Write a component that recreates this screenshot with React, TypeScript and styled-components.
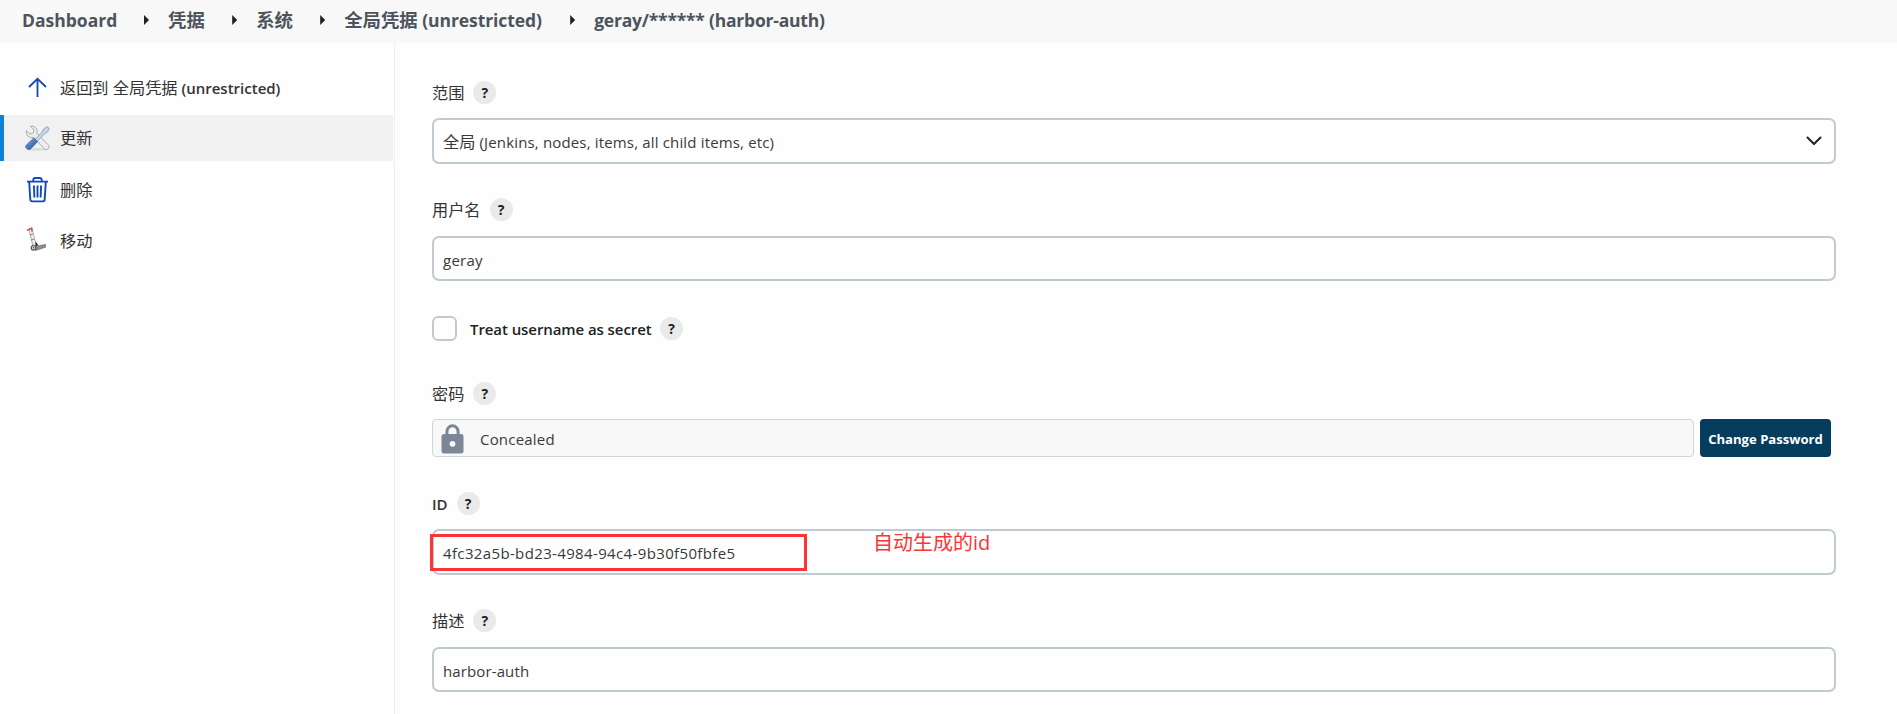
import React from 'react';
import styled, { createGlobalStyle } from 'styled-components';

const GlobalStyle = createGlobalStyle`
  * { box-sizing: border-box; }
  html, body { margin: 0; padding: 0; height: 714px; overflow: hidden; }
  body {
    background: #fefefe;
    color: #333;
    font-family: 'Open Sans', 'Noto Sans', 'Noto Sans CJK SC', sans-serif;
    font-size: 16.2px;
  }
`;

const Page = styled.div`
  display: flex;
  flex-direction: column;
  height: 714px;
`;

const Breadcrumbs = styled.nav`
  display: flex;
  align-items: center;
  flex: none;
  height: 43px;
  padding: 0 0 3px 22px;
  background: #f8f8f8;
`;

const Crumb = styled.a<{ $width: number }>`
  width: ${(p) => p.$width}px;
  font-size: 18.4px;
  font-weight: 700;
  line-height: 24px;
  color: #4d545d;
  white-space: nowrap;
`;

const Separator = styled.i`
  flex: none;
  width: 5px;
  height: 10px;
  margin: 0 19px 0 27px;
  background: #222;
  clip-path: polygon(0 0, 100% 50%, 0 100%);
`;

const Text = styled.span<{ $size?: number; $spacing?: number; $weight?: number }>`
  font-size: ${(p) => p.$size ?? 15}px;
  letter-spacing: ${(p) => p.$spacing ?? 0}px;
  font-weight: ${(p) => p.$weight ?? 'inherit'};
  white-space: pre;
`;

const Body = styled.div`
  display: flex;
  flex: 1;
  min-height: 0;
`;

const Sidebar = styled.aside`
  display: flex;
  flex-direction: column;
  gap: 5px;
  flex: none;
  width: 395px;
  padding: 21px 1px 0 0;
  border-right: 1px solid #efeff0;
`;

const Task = styled.a<{ $active?: boolean }>`
  display: flex;
  align-items: center;
  gap: 10px;
  height: 46px;
  padding: ${(p) => (p.$active ? 0 : 2)}px 0 0 21px;
  background: ${(p) => (p.$active ? '#f1f1f1' : 'transparent')};
  box-shadow: ${(p) => (p.$active ? 'inset 4px 0 0 #0b81d8' : 'none')};
  line-height: 24px;
  white-space: nowrap;

  svg { display: block; flex: none; width: 29px; height: 28px; }
`;

const Form = styled.main`
  display: flex;
  flex-direction: column;
  flex: 1;
  padding: 38px 61px 0 37px;
`;

const Field = styled.section<{ $gap?: number; $after?: number }>`
  display: flex;
  flex-direction: column;
  gap: ${(p) => p.$gap ?? 14}px;
  margin-bottom: ${(p) => p.$after ?? 34}px;
`;

const LabelRow = styled.div`
  display: flex;
  align-items: flex-start;
  gap: 9px;
  height: 24px;
  line-height: 24px;
  color: #333;
`;

const HelpButton = styled.span`
  display: flex;
  align-items: center;
  justify-content: center;
  width: 23px;
  height: 23px;
  border-radius: 50%;
  background: #eaeaea;
  color: #222;
  font-size: 14px;
  font-weight: 700;
  line-height: 23px;
`;

const Control = styled.div<{ $height?: number; $shift?: number }>`
  position: relative;
  display: flex;
  align-items: center;
  justify-content: space-between;
  height: ${(p) => p.$height ?? 45}px;
  padding: ${(p) => p.$shift ?? 2}px 12px 0 9px;
  border: 2px solid #bfcbd0;
  border-radius: 7px;
  color: #3a3a3a;
  white-space: nowrap;
`;

const Chevron = styled.svg`
  width: 16px;
  height: 10px;
`;

const CheckRow = styled.div`
  display: flex;
  align-items: center;
  height: 25px;
  margin-bottom: 41px;
`;

const Checkbox = styled.span`
  width: 25px;
  height: 25px;
  margin-right: 13px;
  border: 2px solid #bfcbd0;
  border-radius: 6px;
`;

const CheckLabel = styled.span`
  width: 190px;
  color: #222;
`;

const PasswordRow = styled.div`
  display: flex;
  gap: 6px;
  height: 38px;
  padding-right: 5px;
`;

const Concealed = styled.div`
  display: flex;
  align-items: center;
  flex: 1;
  gap: 16px;
  padding: 2px 0 0 8px;
  border: 1px solid #cdd6da;
  border-radius: 4px;
  background: #f8f8f8;
  color: #3a3a3a;

  svg { display: block; width: 23px; height: 30px; }
`;

const ChangeButton = styled.button`
  width: 131px;
  padding: 2px 0 0;
  border: 0;
  border-radius: 4px;
  background: #063c5c;
  color: #fff;
  font: 700 13.1px 'Open Sans', sans-serif;
  white-space: nowrap;
`;

const Highlight = styled.div`
  position: absolute;
  left: -4px;
  top: 3px;
  width: 377px;
  height: 37px;
  border: 3px solid #fb3535;
`;

const Note = styled.div`
  position: absolute;
  left: 439px;
  top: -1px;
  color: #fb3535;
  font-size: 20px;
  line-height: 26px;
`;

const Help = () => <HelpButton>?</HelpButton>;

const UpIcon = () => (
  <svg viewBox="0 0 29 28" fill="none" stroke="#1249b8" strokeWidth="1.8">
    <path d="M16.5 23V5M8 13l8.500-8.200L25 13" />
  </svg>
);

const ToolsIcon = () => (
  <svg viewBox="0 0 29 28">
    <defs>
      <linearGradient id="handle" x1="0" y1="0" x2="1" y2="1">
        <stop offset="0" stopColor="#86a9dc" />
        <stop offset="1" stopColor="#244c8c" />
      </linearGradient>
    </defs>
    <ellipse cx="16" cy="25.3" rx="11" ry="1.4" fill="#ddd" />
    <path
      d="M9.500 2.400C13.500 1.200 17.200 5 15.900 9.200l11.100 11.500c1.300 1.300 1.400 3.100.2 4.200-1.100 1.100-3 1-4.200-.3L12.600 13.400c-4.300 1.200-8.200-2.400-7.100-6.700l3.300 3.200 3.500-1 .6-3.200z"
      fill="#ededeb"
      stroke="#a3a5a3"
      strokeWidth=".9"
    />
    <path d="M14 15.500l7.100-7.400 1.400-3.100 3.500-2.400 2.200 1.900-1.700 3.500-3.200 2.100-7.500 7.600z" fill="#c9d7e8" stroke="#8196b5" strokeWidth=".8" />
    <path d="M12.700 13.900l4 3.700-7 7.400c-2.100 2-6.700-1.500-4.600-3.700z" fill="url(#handle)" stroke="#315a98" strokeWidth=".6" />
  </svg>
);

const TrashIcon = () => (
  <svg viewBox="0 0 29 28" fill="none" stroke="#1249b8" strokeWidth="1.9">
    <path d="M6 5.600h21M12.300 5V4a2 2 0 012-2h4.400a2 2 0 012 2v1M8.200 6l1.100 17.500a2 2 0 002 1.900h10.400a2 2 0 002-1.900L24.800 6M12.900 9.500l.5 12M16.500 9.500v12M20.100 9.500l-.5 12" />
  </svg>
);

const TrolleyIcon = () => (
  <svg viewBox="0 0 29 28" fill="none">
    <path d="M9.700 2.500l4.200 18" stroke="#a3a5a0" strokeWidth="4.200" />
    <path d="M9.800 2.500l4.100 17.500" stroke="#ecece8" strokeWidth="2.600" />
    <path d="M8.800 8l3.200-1M10.200 13l3.200-1" stroke="#858782" />
    <path d="M6 3.200l4.700-2 .4 3.500" stroke="#c95555" strokeWidth="1.500" />
    <path d="M14 19.500l10.500-2v2.700l-10 3.200z" fill="#8e908b" stroke="#666964" strokeWidth=".7" />
    <path d="M14.500 14.500l2.700 3.500-2.700 1.700z" fill="#222" />
    <circle cx="12.500" cy="20.800" r="2.300" fill="#ddd" stroke="#555" strokeWidth="1.200" />
    <circle cx="12.500" cy="20.800" r=".7" fill="#333" />
  </svg>
);

const LockIcon = () => (
  <svg viewBox="0 0 23 30">
    <path d="M5.900 12V7.700a5.600 6 0 0111.200 0V12" fill="none" stroke="#7b8799" strokeWidth="3" />
    <rect x=".5" y="10" width="22" height="19.500" rx="2.500" fill="#7b8799" />
    <circle cx="11.500" cy="19.800" r="2.900" fill="#f8f8f8" />
  </svg>
);

export default function App() {
  return (
    <Page>
      <GlobalStyle />
      <Breadcrumbs>
        <Crumb $width={95}><Text $size={17.5}>Dashboard</Text></Crumb>
        <Separator />
        <Crumb $width={37.2}>凭据</Crumb>
        <Separator />
        <Crumb $width={37}>系统</Crumb>
        <Separator />
        <Crumb $width={199}>全局凭据<Text $size={17.5} $spacing={-0.08}> (unrestricted)</Text></Crumb>
        <Separator />
        <Crumb $width={232}><Text $size={17.5} $spacing={-0.22}>geray/****** (harbor-auth)</Text></Crumb>
      </Breadcrumbs>
      <Body>
        <Sidebar>
          <Task>
            <UpIcon />
            <span>返回到 全局凭据<Text $weight={600}> (unrestricted)</Text></span>
          </Task>
          <Task $active><ToolsIcon />更新</Task>
          <Task><TrashIcon />删除</Task>
          <Task><TrolleyIcon />移动</Task>
        </Sidebar>
        <Form>
          <Field $gap={13}>
            <LabelRow>范围<Help /></LabelRow>
            <Control $height={46} $shift={0}>
              <span>全局<Text $spacing={0.16}> (Jenkins, nodes, items, all child items, etc)</Text></span>
              <Chevron viewBox="0 0 16 10" fill="none" stroke="#222" strokeWidth="2">
                <path d="M1.500 1.500L8 8l6.500-6.500" strokeLinecap="round" strokeLinejoin="round" />
              </Chevron>
            </Control>
          </Field>
          <Field $after={35}>
            <LabelRow>用户名<Help /></LabelRow>
            <Control><Text $spacing={0.25}>geray</Text></Control>
          </Field>
          <CheckRow>
            <Checkbox />
            <CheckLabel><Text $weight={600} $spacing={-0.08}>Treat username as secret</Text></CheckLabel>
            <Help />
          </CheckRow>
          <Field $gap={13} $after={35}>
            <LabelRow>密码<Help /></LabelRow>
            <PasswordRow>
              <Concealed><LockIcon /><Text $spacing={0.2}>Concealed</Text></Concealed>
              <ChangeButton>Change Password</ChangeButton>
            </PasswordRow>
          </Field>
          <Field $gap={13}>
            <LabelRow><Text $weight={600}>ID</Text><Help /></LabelRow>
            <Control $height={46}>
              <Text $spacing={0.36}>4fc32a5b-bd23-4984-94c4-9b30f50fbfe5</Text>
              <Highlight />
              <Note>自动生成的id</Note>
            </Control>
          </Field>
          <Field>
            <LabelRow>描述<Help /></LabelRow>
            <Control><Text $spacing={0.12}>harbor-auth</Text></Control>
          </Field>
        </Form>
      </Body>
    </Page>
  );
}
